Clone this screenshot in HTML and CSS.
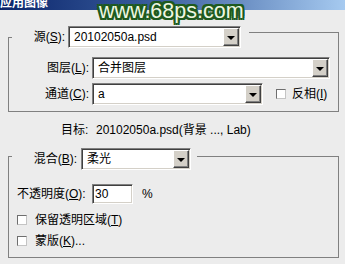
FILE: index.html
```html
<!DOCTYPE html>
<html>
<head>
<meta charset="utf-8">
<link rel="stylesheet" href="styles.css">
</head>
<body>
<div class="titlebar"><span>应用图像</span></div>
<div class="content">
  <div class="group">
    <div class="g-head">
      <span class="corner c1"></span>
      <span class="h-label hl1">源(<u>S</u>):</span>
      <div class="combo w-src"><span class="val">20102050a.psd</span><span class="btn"><i></i></span></div>
      <span class="tail t1"></span>
    </div>
    <div class="g-body b1">
      <div class="row">
        <span class="r-label">图层(<u>L</u>):</span>
        <div class="combo w-layer"><span class="val">合并图层</span><span class="btn"><i></i></span></div>
      </div>
      <div class="row r2">
        <span class="r-label">通道(<u>C</u>):</span>
        <div class="combo w-chan"><span class="val">a</span><span class="btn"><i></i></span></div>
        <span class="check inv"></span>
        <span class="c-label">反相(<u>I</u>)</span>
      </div>
    </div>
  </div>

  <div class="target"><span class="t-label">目标:</span><span>20102050a.psd(背景 ..., Lab)</span></div>

  <div class="group g2">
    <div class="g-head">
      <span class="corner c2"></span>
      <span class="h-label hl2">混合(<u>B</u>):</span>
      <div class="combo w-blend"><span class="val">柔光</span><span class="btn"><i></i></span></div>
      <span class="tail t2"></span>
    </div>
    <div class="g-body b2">
      <div class="row">
        <span class="o-label">不透明度(<u>O</u>):</span>
        <div class="input">30</div>
        <span class="pct">%</span>
      </div>
      <div class="crow">
        <span class="check"></span>
        <span class="c-label">保留透明区域(<u>T</u>)</span>
      </div>
      <div class="crow cr2">
        <span class="check"></span>
        <span class="c-label">蒙版(<u>K</u>)...</span>
      </div>
    </div>
  </div>
</div>
<div class="watermark">www.68ps.com</div>
</body>
</html>
```

FILE: styles.css
```css
html, body {
  margin: 0;
  padding: 0;
}
body {
  width: 345px;
  height: 264px;
  overflow: hidden;
  position: relative;
  background: #ececec;
  color: #000;
  font-family: "Liberation Sans", "Noto Sans CJK SC", sans-serif;
  font-size: 12px;
  line-height: 14px;
}
u {
  text-decoration: underline;
  text-underline-offset: 1px;
}
.titlebar {
  height: 10px;
  overflow: hidden;
  background: linear-gradient(to right, #0a246a 0%, #3a5e9e 45%, #a6caf0 100%);
  color: #fff;
  font-weight: bold;
}
.titlebar span {
  display: block;
  line-height: 12px;
  margin-top: -3px;
  padding-left: 0;
}
.content {
  padding: 16px 6px 0 8px;
}
.group {
  display: flex;
  flex-direction: column;
}
.g-head {
  display: flex;
  height: 22px;
  align-items: center;
}
.corner {
  align-self: flex-end;
  width: 4px;
  box-sizing: border-box;
  border-top: 1px solid #808080;
  border-left: 1px solid #808080;
}
.c1 { height: 11px; }
.c2 { height: 14px; }
.tail {
  align-self: flex-end;
  flex: 1;
  box-sizing: border-box;
  border-top: 1px solid #808080;
  border-right: 1px solid #808080;
}
.t1 { height: 16px; margin-left: 8px; }
.t2 { height: 14px; margin-left: 6px; }
.h-label {
  box-sizing: border-box;
  text-align: right;
}
.hl1 { width: 56px; padding-right: 3px; }
.hl2 { width: 69px; padding-right: 4px; }

.combo {
  box-sizing: border-box;
  height: 22px;
  display: flex;
  align-items: stretch;
  background: #fff;
  border-top: 1px solid #808080;
  border-left: 1px solid #808080;
  border-right: 1px solid #fff;
  border-bottom: 1px solid #fff;
  box-shadow: inset 1px 1px 0 #404040, inset -1px -1px 0 #d4d0c8;
  padding: 1px;
}
.combo .val {
  flex: 1;
  display: flex;
  align-items: center;
  padding-left: 4px;
  white-space: nowrap;
  overflow: hidden;
}
.combo .btn {
  width: 16px;
  box-sizing: border-box;
  background: #d4d0c8;
  border-top: 1px solid #fff;
  border-left: 1px solid #fff;
  border-right: 1px solid #404040;
  border-bottom: 1px solid #404040;
  box-shadow: inset -1px -1px 0 #808080;
  display: flex;
  align-items: center;
  justify-content: center;
}
.combo .btn i {
  display: block;
  width: 0;
  height: 0;
  border-left: 4px solid transparent;
  border-right: 4px solid transparent;
  border-top: 4px solid #000;
  margin-top: 1px;
}
.w-src { width: 173px; }
.w-layer { width: 238px; }
.w-chan { width: 171px; }
.w-blend { width: 110px; }

.g-body {
  border: 1px solid #808080;
  border-top: none;
}
.b1 { padding: 9px 0 6px 0; }
.b2 { padding: 14px 0 9px 0; }
.row {
  display: flex;
  align-items: center;
}
.r2 { margin-top: 4px; }
.r-label {
  width: 83px;
  box-sizing: border-box;
  text-align: right;
  padding-right: 3px;
}
.check {
  width: 10px;
  height: 10px;
  box-sizing: border-box;
  background: #fff;
  border-top: 1px solid #6e6e6e;
  border-left: 1px solid #6e6e6e;
  border-right: 1px solid #c4c4c4;
  border-bottom: 1px solid #c4c4c4;
}
.inv { margin-left: 13px; }
.c-label { margin-left: 6px; }

.target {
  display: flex;
  margin-top: 11px;
  padding-left: 53px;
  height: 14px;
  align-items: center;
}
.t-label { width: 35px; }

.g2 { margin-top: 11px; }
.o-label {
  width: 83px;
  box-sizing: border-box;
  padding-left: 8px;
}
.input {
  box-sizing: border-box;
  width: 41px;
  height: 20px;
  background: #fff;
  border-top: 1px solid #808080;
  border-left: 1px solid #808080;
  border-right: 1px solid #fff;
  border-bottom: 1px solid #fff;
  box-shadow: inset 1px 1px 0 #404040, inset -1px -1px 0 #d4d0c8;
  padding-left: 2px;
  display: flex;
  align-items: center;
}
.pct { margin-left: 9px; }
.crow {
  display: flex;
  align-items: center;
  height: 14px;
  padding-left: 8px;
  margin-top: 9px;
}
.crow .c-label { margin-left: 8px; }
.cr2 { margin-top: 7px; }

.watermark {
  position: absolute;
  left: 99px;
  top: 1px;
  font-family: "Liberation Sans", sans-serif;
  font-size: 21.5px;
  line-height: 21.5px;
  color: #eef7e2;
  white-space: nowrap;
  text-shadow:
    2px 0 0 #1e5a1e, -2px 0 0 #1e5a1e, 0 2px 0 #1e5a1e, 0 -2px 0 #1e5a1e,
    2px 2px 0 #1e5a1e, -2px -2px 0 #1e5a1e, 2px -2px 0 #1e5a1e, -2px 2px 0 #1e5a1e,
    1px 0 0 #1e5a1e, -1px 0 0 #1e5a1e, 0 1px 0 #1e5a1e, 0 -1px 0 #1e5a1e;
}
```
